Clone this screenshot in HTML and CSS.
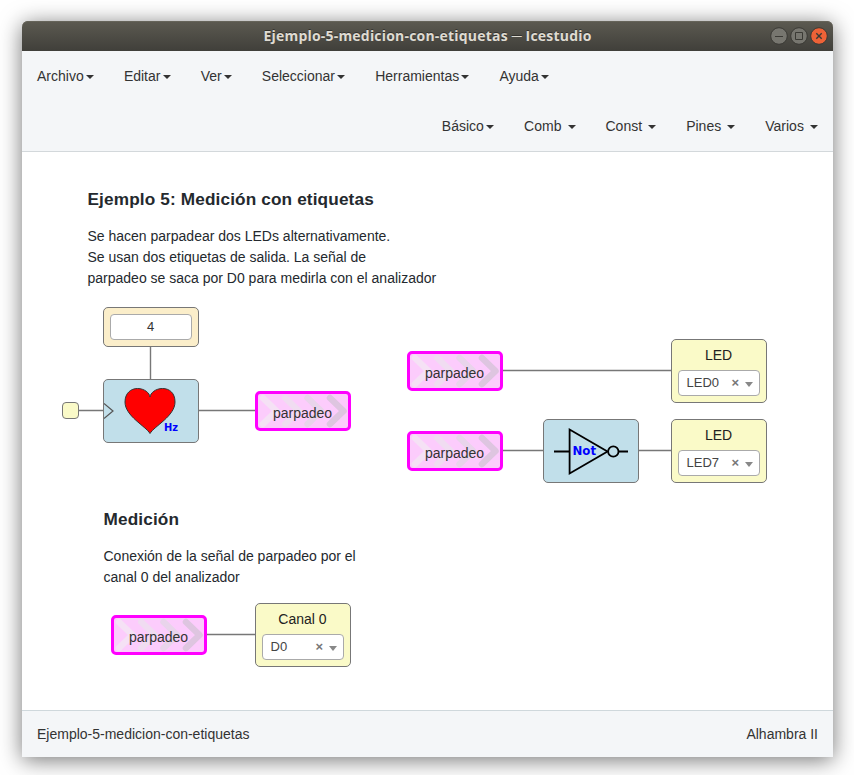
FILE: index.html
```html
<!DOCTYPE html>
<html lang="es">
<head>
<meta charset="utf-8">
<title>Ejemplo-5-medicion-con-etiquetas ─ Icestudio</title>
<link rel="stylesheet" href="styles.css">
</head>
<body>
<svg width="0" height="0" class="defs">
  <symbol id="chevrons" viewBox="0 0 90 34">
    <g fill="none" stroke-width="6.500" stroke-linecap="round" stroke-linejoin="round">
      <path d="M5 4 L18.500 17 L5 30" stroke="#f5e1f5"/>
      <path d="M27.300 4 L40.800 17 L27.300 30" stroke="#f0dcf1"/>
      <path d="M49.600 4 L63.100 17 L49.600 30" stroke="#e9d4eb"/>
      <path d="M72 4 L85.500 17 L72 30" stroke="#dec5e0"/>
    </g>
  </symbol>
</svg>
<div class="window">
  <header class="titlebar">
    <h1 class="title">Ejemplo-5-medicion-con-etiquetas ─ Icestudio</h1>
    <div class="controls">
      <svg width="18" height="18" viewBox="0 0 18 18"><circle cx="9" cy="9" r="8.3" class="btn"/><path d="M5 9.5h8" class="sign"/></svg>
      <svg width="18" height="18" viewBox="0 0 18 18"><circle cx="9" cy="9" r="8.3" class="btn"/><path d="M5.500 5.500h7v7h-7z" class="sign"/></svg>
      <svg width="18" height="18" viewBox="0 0 18 18"><circle cx="9" cy="9" r="8.3" class="btn close"/><path d="M6.300 6.300l5.400 5.400M11.700 6.300l-5.400 5.400" class="sign cross"/></svg>
    </div>
  </header>
  <nav class="menus">
    <ul class="menu">
      <li>Archivo<b class="caret"></b></li>
      <li>Editar<b class="caret"></b></li>
      <li>Ver<b class="caret"></b></li>
      <li>Seleccionar<b class="caret"></b></li>
      <li>Herramientas<b class="caret"></b></li>
      <li>Ayuda<b class="caret"></b></li>
    </ul>
    <ul class="menu right">
      <li>Básico<b class="caret"></b></li>
      <li>Comb <b class="caret"></b></li>
      <li>Const <b class="caret"></b></li>
      <li>Pines <b class="caret"></b></li>
      <li>Varios <b class="caret"></b></li>
    </ul>
  </nav>
  <main class="canvas">
    <svg class="wires" width="811" height="558" viewBox="0 0 811 558">
      <path d="M128.500 195V227M57 258.500H81M177 258.500H233M481 218.500H649M481 298.500H521M617 298.500H649M185 482.500H233"/>
    </svg>

    <section class="note n1">
      <h2>Ejemplo 5: Medición con etiquetas</h2>
      <p>Se hacen parpadear dos LEDs alternativamente.<br>Se usan dos etiquetas de salida. La señal de<br>parpadeo se saca por D0 para medirla con el analizador</p>
    </section>
    <section class="note n2">
      <h2>Medición</h2>
      <p>Conexión de la señal de parpadeo por el<br>canal 0 del analizador</p>
    </section>

    <div class="block constant"><div class="field">4</div></div>
    <div class="block clock"></div>
    <div class="block heart">
      <svg width="94" height="62" viewBox="0 0 94 62">
        <path d="M0 23.500L9 31L0 38.500" fill="none" stroke="#555" stroke-width="1.200"/>
        <path d="M46 53.500C41.500 46 21 36 21 22C21 13 27 8.500 33.500 8.500C40.500 8.500 45.500 13 46 17C46.500 13 51.500 8.500 58.500 8.500C65.500 8.500 71 13 71 22C71 36 50.500 46 46 53.500Z" fill="#f00" stroke="#333"/>
        <text x="60" y="51" font-size="11" class="tag">Hz</text>
      </svg>
    </div>
    <div class="block gate">
      <svg width="94" height="62" viewBox="0 0 94 62">
        <path d="M10 31.500H25.600M25.600 9.500V53.500L63.500 31.500ZM74.500 31.500H84" fill="none" stroke="#000" stroke-width="1.800"/>
        <circle cx="69.300" cy="31.500" r="5.200" fill="none" stroke="#000" stroke-width="1.800"/>
        <text x="28.500" y="35" font-size="12" textLength="23.500" lengthAdjust="spacingAndGlyphs" class="tag">Not</text>
      </svg>
    </div>

    <div class="label l1"><svg width="90" height="34"><use href="#chevrons"/></svg><span>parpadeo</span></div>
    <div class="label l2"><svg width="90" height="34"><use href="#chevrons"/></svg><span>parpadeo</span></div>
    <div class="label l3"><svg width="90" height="34"><use href="#chevrons"/></svg><span>parpadeo</span></div>
    <div class="label l4"><svg width="90" height="34"><use href="#chevrons"/></svg><span>parpadeo</span></div>

    <div class="block pin p1"><div class="name">LED</div><div class="select"><span>LED0</span><b>×</b><i></i></div></div>
    <div class="block pin p2"><div class="name">LED</div><div class="select"><span>LED7</span><b>×</b><i></i></div></div>
    <div class="block pin p3"><div class="name">Canal 0</div><div class="select"><span>D0</span><b>×</b><i></i></div></div>
  </main>
  <footer class="status"><span>Ejemplo-5-medicion-con-etiquetas</span><span>Alhambra II</span></footer>
</div>
</body>
</html>
```
FILE: styles.css
```css
* { box-sizing: border-box; }
html, body { height: 100%; }
body {
  margin: 0;
  padding: 21px 21px 18px 22px;
  background: #fff;
  overflow: hidden;
  font: 14px/20px "Liberation Sans", Arial, sans-serif;
  color: #333;
}
.defs { position: absolute; }
.window {
  height: 736px;
  display: flex;
  flex-direction: column;
  border-radius: 6px 6px 0 0;
  box-shadow: 0 3px 22px rgba(0, 0, 0, .55);
}
.titlebar {
  flex: 0 0 30px;
  position: relative;
  display: flex;
  justify-content: center;
  align-items: center;
  border-radius: 6px 6px 0 0;
  background: linear-gradient(#5c5a51, #403f3a);
  box-shadow: inset 0 1px #66645a;
}
.title {
  margin: 0;
  font: bold 14px/30px "Open Sans", sans-serif;
  letter-spacing: .2px;
  color: #dfdbd2;
  text-shadow: 0 -1px #33322e;
}
.controls { position: absolute; right: 5px; top: 6px; display: flex; gap: 2px; }
.controls svg { display: block; }
.btn { fill: #77766f; stroke: #3b3a35; }
.btn.close { fill: #ee6237; }
.sign { fill: none; stroke: #3b3a35; }
.sign.cross { stroke-width: 1.4; }
.menus {
  flex: 0 0 101px;
  background: #f4f6f8;
  border-bottom: 1px solid #d3d8db;
}
.menu { display: flex; margin: 0; padding: 0; list-style: none; height: 50px; }
.menu.right { justify-content: flex-end; }
.menu li { padding: 15px; white-space: pre; }
.caret {
  display: inline-block;
  margin-left: 2.2px;
  vertical-align: middle;
  border: 4px solid transparent;
  border-top-color: #333;
  border-bottom: 0;
}
.canvas { flex: 1; position: relative; background: #fff; }
.wires { position: absolute; left: 0; top: 0; fill: none; stroke: #777; stroke-width: 1.4; }
.note { position: absolute; color: #24292e; white-space: nowrap; line-height: 21px; }
.note h2 { margin: 0 0 16px; font-size: 17.2px; line-height: 21px; letter-spacing: .14px; }
.note p { margin: 0; }
.n1 { left: 65.500px; top: 37px; }
.n2 { left: 81.500px; top: 357px; }
.block {
  position: absolute;
  width: 96px;
  height: 64px;
  border: 1px solid #777;
  border-radius: 5px;
}
.block svg { display: block; }
.constant { left: 81px; top: 155px; height: 40px; padding: 6px; background: #fbeeca; }
.field {
  height: 26px;
  padding-right: 1px;
  border: 1px solid #aaa;
  border-radius: 4px;
  background: #fff;
  font-size: 13px;
  line-height: 24px;
  text-align: center;
}
.clock { left: 40px; top: 250px; width: 17px; height: 17px; border-radius: 4px; background: #fafac8; }
.heart { left: 81px; top: 227px; background: #c1dfea; }
.gate { left: 521px; top: 267px; background: #c1dfea; }
.tag { font-family: "DejaVu Sans Condensed", "DejaVu Sans", sans-serif; font-weight: bold; fill: #00f; }
.label {
  position: absolute;
  width: 96px;
  height: 40px;
  border: 3px solid #f0f;
  border-radius: 5px;
  background: #fcccfc;
  display: grid;
}
.label > * { grid-area: 1 / 1; }
.label span { padding-right: 1px; line-height: 38px; text-align: center; z-index: 1; }
.l1 { left: 233px; top: 239px; }
.l2 { left: 385px; top: 199px; }
.l3 { left: 385px; top: 279px; }
.l4 { left: 89px; top: 463px; }
.pin { padding: 5px 6px 6px; background: #fafac8; color: #222; }
.p1 { left: 649px; top: 187px; }
.p2 { left: 649px; top: 267px; }
.p3 { left: 233px; top: 451px; }
.name { padding-right: 1px; line-height: 20px; text-align: center; margin-bottom: 5px; }
.select {
  display: flex;
  align-items: center;
  height: 26px;
  padding: 0 6px 0 7.5px;
  border: 1px solid #aaa;
  border-radius: 4px;
  background: #fff;
  font-size: 13px;
  line-height: 24px;
  color: #444;
}
.select b { margin-left: auto; color: #777; }
.select i {
  margin: 3px 0 0 6px;
  border: 4.5px solid transparent;
  border-top: 5px solid #888;
  border-bottom: 0;
}
.status {
  flex: 0 0 47px;
  display: flex;
  justify-content: space-between;
  padding: 0 15px;
  border-top: 1px solid #cfd8dc;
  background: #f4f6f8;
  line-height: 46px;
}
```
